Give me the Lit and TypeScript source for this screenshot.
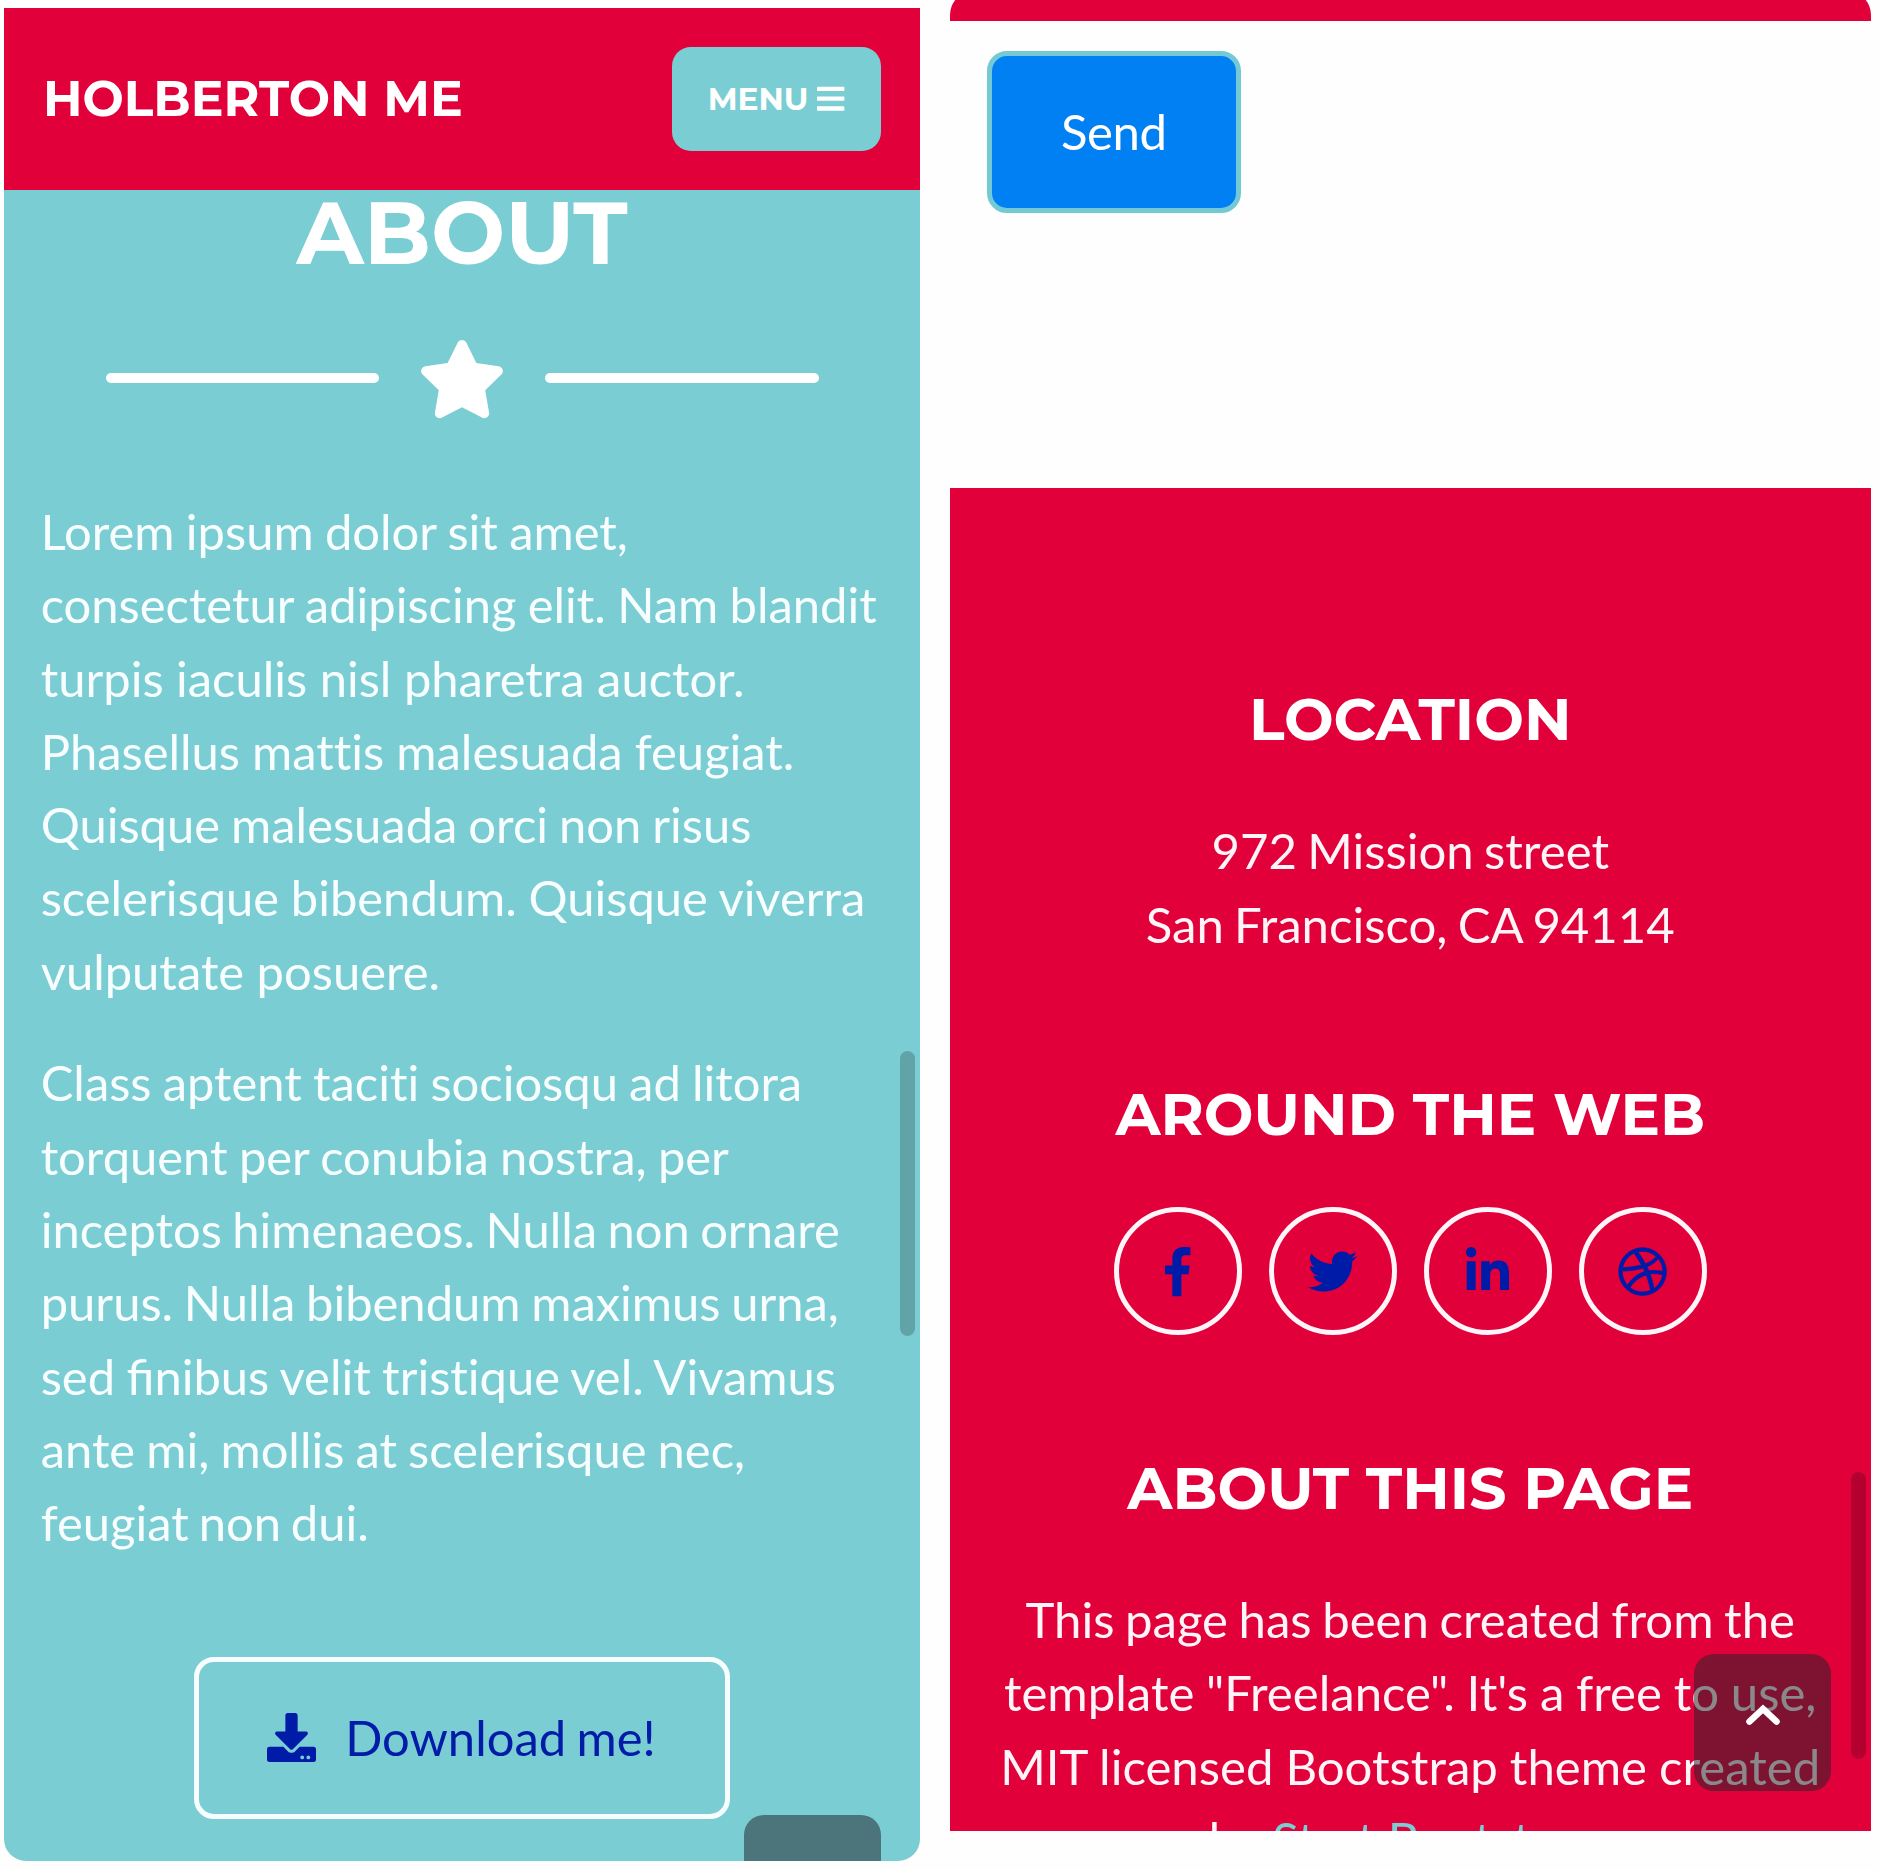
import { LitElement, html, css, svg } from "lit";
import { customElement, property } from "lit/decorators.js";
import { styleMap } from "lit/directives/style-map.js";

interface Glyph {
  box: string;
  path: string;
}

const GLYPHS: Record<string, Glyph> = {
  star: {
    box: "0 0 576 512",
    path: "M259.3 17.8L194 150.2 47.9 171.5c-26.2 3.8-36.7 36.1-17.7 54.6l105.7 103-25 145.5c-4.5 26.3 23.2 46 46.4 33.7L288 439.6l130.7 68.7c23.2 12.2 50.9-7.4 46.4-33.7l-25-145.5 105.7-103c19-18.5 8.5-50.8-17.7-54.6L382 150.2 316.7 17.8c-11.7-23.6-45.6-23.9-57.4 0z",
  },
  bars: {
    box: "0 0 448 512",
    path: "M16 132h416c8.8 0 16-7.2 16-16V76c0-8.8-7.2-16-16-16H16C7.2 60 0 67.2 0 76v40c0 8.8 7.2 16 16 16zm0 160h416c8.8 0 16-7.2 16-16v-40c0-8.8-7.2-16-16-16H16c-8.8 0-16 7.2-16 16v40c0 8.8 7.2 16 16 16zm0 160h416c8.8 0 16-7.2 16-16v-40c0-8.8-7.2-16-16-16H16c-8.8 0-16 7.2-16 16v40c0 8.8 7.2 16 16 16z",
  },
  download: {
    box: "0 0 512 512",
    path: "M216 0h80c13.3 0 24 10.7 24 24v168h87.7c17.8 0 26.7 21.5 14.1 34.1L269.7 378.3c-7.5 7.5-19.8 7.5-27.3 0L90.1 226.1c-12.6-12.6-3.7-34.1 14.1-34.1H192V24c0-13.3 10.7-24 24-24zm296 376v112c0 13.3-10.7 24-24 24H24c-13.3 0-24-10.7-24-24V376c0-13.3 10.7-24 24-24h146.7l49 49c20.1 20.1 52.5 20.1 72.6 0l49-49H488c13.3 0 24 10.7 24 24zm-124 88c0-11-9-20-20-20s-20 9-20 20 9 20 20 20 20-9 20-20zm64 0c0-11-9-20-20-20s-20 9-20 20 9 20 20 20 20-9 20-20z",
  },
  facebook: {
    box: "0 0 264 512",
    path: "M215.8 85H264V3.6C255.7 2.5 227.1 0 193.8 0 124.3 0 76.7 42.4 76.7 120.3V192H0v91h76.7v229h94V283h73.6l11.7-91h-85.3v-62.7c0-26.3 7.3-44.3 45.1-44.3z",
  },
  twitter: {
    box: "0 0 512 512",
    path: "M459.37 151.716c.325 4.548.325 9.097.325 13.645 0 138.72-105.583 298.558-298.558 298.558-59.452 0-114.68-17.219-161.137-47.106 8.447.974 16.568 1.299 25.34 1.299 49.055 0 94.213-16.568 130.274-44.832-46.132-.975-84.792-31.188-98.112-72.772 6.498.974 12.995 1.624 19.818 1.624 9.421 0 18.843-1.3 27.614-3.573-48.081-9.747-84.143-51.98-84.143-102.985v-1.299c13.969 7.797 30.214 12.67 47.431 13.319-28.264-18.843-46.781-51.005-46.781-87.391 0-19.492 5.197-37.36 14.294-52.954 51.655 63.675 129.3 105.258 216.365 109.807-1.624-7.797-2.599-15.918-2.599-24.04 0-57.828 46.782-104.934 104.934-104.934 30.213 0 57.502 12.67 76.67 33.137 23.715-4.548 46.456-13.32 66.599-25.34-7.798 24.366-24.366 44.833-46.132 57.827 21.117-2.273 41.584-8.122 60.426-16.243-14.292 20.791-32.161 39.308-52.628 54.253z",
  },
  linkedin: {
    box: "0 0 448 512",
    path: "M100.28 448H7.4V148.9h92.88zM53.79 108.1C24.09 108.1 0 83.5 0 53.8a53.79 53.79 0 0 1 107.58 0c0 29.7-24.1 54.3-53.79 54.3zM447.9 448h-92.68V302.4c0-34.7-.7-79.2-48.29-79.2-48.29 0-55.69 37.7-55.69 76.7V448h-92.78V148.9h89.08v40.8h1.3c12.4-23.5 42.69-48.3 87.88-48.3 94 0 111.28 61.9 111.28 142.3V448z",
  },
  dribbble: {
    box: "0 0 512 512",
    path: "M256 8C119.252 8 8 119.252 8 256s111.252 248 248 248 248-111.252 248-248S392.748 8 256 8zm163.97 114.366c29.503 36.046 47.369 81.957 47.835 131.955-6.984-1.477-77.018-15.682-147.502-6.818-5.752-14.041-11.181-26.393-18.617-41.614 78.321-31.977 113.818-77.482 118.284-83.523zM396.421 97.87c-3.81 5.427-35.697 48.286-111.021 76.519-34.712-63.776-73.185-116.168-79.04-124.008 67.176-16.193 137.966 1.27 190.061 47.489zm-230.48-33.25c5.585 7.659 43.438 60.116 78.537 122.509-99.087 26.313-186.36 25.934-195.834 25.809C62.38 147.205 106.678 92.573 165.941 64.62zM44.17 256.323c0-2.166.043-4.322.108-6.473 9.268.19 111.92 1.513 217.706-30.146 6.064 11.868 11.857 23.915 17.174 35.949-76.599 21.575-146.194 83.527-180.531 142.306C64.794 360.405 44.17 310.73 44.17 256.323zm81.807 167.113c22.127-45.233 82.178-103.622 167.579-132.756 29.74 77.283 42.039 142.053 45.189 160.638-68.112 29.013-150.015 21.053-212.768-27.882zm248.38 8.489c-2.171-12.886-13.446-74.897-41.152-151.033 66.38-10.626 124.7 6.768 131.947 9.055-9.442 58.941-43.273 109.844-90.795 141.978z",
  },
};

// Each line of copy carries its own word gap adjustment in pixels.
type Line = [text: string, gap: number];

const ABOUT_TEXT: Line[][] = [
  [
    ["Lorem ipsum dolor sit amet,", -1.2],
    ["consectetur adipiscing elit. Nam blandit", -1.2],
    ["turpis iaculis nisl pharetra auctor.", 0],
    ["Phasellus mattis malesuada feugiat.", -0.4],
    ["Quisque malesuada orci non risus", -1.5],
    ["scelerisque bibendum. Quisque viverra", -0.8],
    ["vulputate posuere.", 0],
  ],
  [
    ["Class aptent taciti sociosqu ad litora", -1.3],
    ["torquent per conubia nostra, per", -1.2],
    ["inceptos himenaeos. Nulla non ornare", -2.1],
    ["purus. Nulla bibendum maximus urna,", -1.8],
    ["sed finibus velit tristique vel. Vivamus", -1.1],
    ["ante mi, mollis at scelerisque nec,", -1.4],
    ["feugiat non dui.", -2.6],
  ],
];

const ADDRESS: Line[] = [
  ["972 Mission street", -2.3],
  ["San Francisco, CA 94114", -2.3],
];

const CREDITS: Line[] = [
  ["This page has been created from the", -2],
  ["template \"Freelance\". It's a free to use,", -0.8],
  ["MIT licensed Bootstrap theme created", -0.6],
];

// The copy keeps only the "fi" ligature.
const withLigature = (text: string) =>
  text.split("fi").map((part, i) => (i ? html`<span class="lig">fi</span>${part}` : part));

const renderLines = (lines: Line[]) =>
  lines.map(
    ([text, gap]) =>
      html`<span class="line" style=${styleMap({ wordSpacing: `${gap}px` })}>${withLigature(text)}</span>`
  );

@customElement("fa-icon")
class FaIcon extends LitElement {
  @property() name = "star";

  static styles = css`
    :host { display: block; }
    .glyph { display: block; width: 100%; height: 100%; fill: currentColor; overflow: visible; }
    .bold { stroke: currentColor; stroke-width: 8; }
  `;

  render() {
    const g = GLYPHS[this.name];
    const cls = this.name === "dribbble" ? "glyph bold" : "glyph";
    return html`<svg class=${cls} viewBox=${g.box}>${svg`<path d=${g.path}></path>`}</svg>`;
  }
}

const copyStyles = css`
  .line { display: block; font-variant-ligatures: none; }
  .lig { font-variant-ligatures: normal; }
`;

@customElement("about-screen")
class AboutScreen extends LitElement {
  static styles = [
    copyStyles,
    css`
      :host { display: block; font-family: Lato, sans-serif; color: #fff; }
      .screen {
        position: relative; width: 916px; height: 1853px; overflow: hidden;
        background: #7acdd3; border-radius: 0 0 22px 22px;
      }
      .nav {
        display: flex; align-items: center; justify-content: space-between;
        height: 181.5px; box-sizing: border-box; padding: 0 39px 0 39px; background: #e2003b;
      }
      .display { font-family: Montserrat, Inter, sans-serif; font-weight: 700; white-space: nowrap; }
      .brand { font-size: 48.9px; }
      .menu {
        display: flex; align-items: center; justify-content: center; gap: 9px;
        width: 209.5px; height: 103.5px; border-radius: 19px; background: #7acdd3;
        font-size: 31.3px;
      }
      .bars { width: 27.4px; height: 31.3px; }
      .title { margin: 0; text-align: center; font-size: 87.9px; line-height: 86px; }
      .divider { display: flex; align-items: center; justify-content: center; gap: 39px; margin-top: 64.5px; }
      .rule { width: 273.5px; height: 10px; margin-bottom: 1.5px; border-radius: 5px; background: #fff; }
      .star { width: 88px; height: 78.2px; }
      .copy { margin-top: 76.8px; padding: 0 36.7px; font-size: 48.9px; line-height: 73.3px; white-space: nowrap; color: #f8feff; }
      .para { margin: 0 0 38.4px; }
      .para:last-child { margin-bottom: 0; }
      .download {
        display: flex; align-items: center; box-sizing: border-box; gap: 29px;
        width: 536.5px; height: 161.5px; margin: 97.7px auto 0; padding: 0 0 1px 68.5px;
        border: 5px solid #f8feff; border-radius: 20px;
        color: #001ba8; font-size: 48.9px; white-space: nowrap; word-spacing: -2px;
      }
      .tray { width: 49px; height: 49px; }
      .thumb {
        position: absolute; right: 5px; top: 1043px; width: 15px; height: 285px;
        border-radius: 8px; background: rgba(0, 0, 0, 0.2);
      }
      .top {
        position: absolute; right: 39px; top: 1806.5px; width: 137px; height: 137px;
        border-radius: 20px; background: rgba(33, 37, 41, 0.52);
      }
    `,
  ];

  render() {
    return html`
      <div class="screen">
        <div class="nav">
          <span class="display brand">HOLBERTON ME</span>
          <div class="menu display"><span>MENU</span><fa-icon class="bars" name="bars"></fa-icon></div>
        </div>
        <h2 class="display title">ABOUT</h2>
        <div class="divider">
          <div class="rule"></div>
          <fa-icon class="star" name="star"></fa-icon>
          <div class="rule"></div>
        </div>
        <div class="copy">
          ${ABOUT_TEXT.map((lines) => html`<p class="para">${renderLines(lines)}</p>`)}
        </div>
        <div class="download"><fa-icon class="tray" name="download"></fa-icon><span>Download me!</span></div>
        <div class="thumb"></div>
        <div class="top"></div>
      </div>
    `;
  }
}

@customElement("contact-screen")
class ContactScreen extends LitElement {
  static styles = [
    copyStyles,
    css`
      :host { display: block; font-family: Lato, sans-serif; color: #fff; }
      .screen { position: relative; width: 920.5px; height: 1831px; overflow: hidden; }
      .strip { height: 30px; margin-top: -9px; border-radius: 24px 24px 0 0; background: #e2003b; }
      .form { height: 467px; box-sizing: border-box; padding: 30px 37px; }
      .send {
        display: flex; align-items: center; justify-content: center; box-sizing: border-box;
        width: 253.5px; height: 161.5px; border: 5px solid #74cad4; border-radius: 20px;
        padding-bottom: 2px; background: #0080f3; font-size: 49.1px; letter-spacing: -0.4px;
      }
      .footer {
        height: 1343px; box-sizing: border-box; padding-top: 196.2px; background: #e2003b;
        text-align: center; white-space: nowrap;
      }
      .heading {
        margin: 0; font-family: Montserrat, Inter, sans-serif; font-weight: 700;
        font-size: 58.9px; line-height: 70px;
      }
      .heading + .text { margin-top: 60px; }
      .spaced { margin-top: 117.5px; }
      .text { margin: 0; font-size: 49.1px; line-height: 73.5px; color: #fff4f7; }
      .social { display: flex; justify-content: center; gap: 27px; margin-top: 58.8px; }
      .social + .spaced { margin-top: 117.5px; }
      .round {
        display: flex; align-items: center; justify-content: center; box-sizing: border-box;
        width: 128px; height: 128px; border: 5px solid #fff4f7; border-radius: 50%; color: #001ba8;
      }
      .facebook { width: 25.4px; height: 49.2px; }
      .twitter, .dribbble { width: 49.2px; height: 49.2px; }
      .linkedin { width: 43px; height: 49.2px; }
      .link { color: #7acdd3; }
      .thumb {
        position: absolute; right: 4.5px; top: 1472px; width: 15px; height: 287px;
        border-radius: 8px; background: rgba(0, 0, 0, 0.2);
      }
      .top {
        position: absolute; right: 39.5px; top: 1654px; width: 137px; height: 137px;
        display: flex; align-items: center; justify-content: center;
        border-radius: 20px; background: rgba(33, 37, 41, 0.52);
      }
      .chevron {
        width: 36px; height: 22px; margin-bottom: 15px; fill: none; stroke: #fff;
        stroke-width: 6.4; stroke-linecap: round; stroke-linejoin: miter;
      }
    `,
  ];

  render() {
    return html`
      <div class="screen">
        <div class="strip"></div>
        <div class="form"><div class="send">Send</div></div>
        <div class="footer">
          <h4 class="heading">LOCATION</h4>
          <p class="text">${renderLines(ADDRESS)}</p>
          <h4 class="heading spaced">AROUND THE WEB</h4>
          <div class="social">
            ${["facebook", "twitter", "linkedin", "dribbble"].map(
              (n) => html`<div class="round"><fa-icon class=${n} name=${n}></fa-icon></div>`
            )}
          </div>
          <h4 class="heading spaced">ABOUT THIS PAGE</h4>
          <p class="text">
            ${renderLines(CREDITS)}
            <span class="line">by <span class="link">Start Bootstrap</span>.</span>
          </p>
        </div>
        <div class="thumb"></div>
        <div class="top">
          <svg class="chevron" viewBox="0 0 36 22"><path d="M4.4 17.600 L18 4.800 L31.600 17.600"></path></svg>
        </div>
      </div>
    `;
  }
}

@customElement("app-root")
class AppRoot extends LitElement {
  static styles = css`
    :host { display: block; }
    .page {
      display: flex; align-items: flex-start; box-sizing: border-box; gap: 30px;
      width: 1879px; height: 1870px; padding-left: 4px; overflow: hidden; background: #fefefe;
    }
    .about { margin-top: 8px; }
  `;

  render() {
    return html`
      <div class="page">
        <about-screen class="about"></about-screen>
        <contact-screen></contact-screen>
      </div>
    `;
  }
}
